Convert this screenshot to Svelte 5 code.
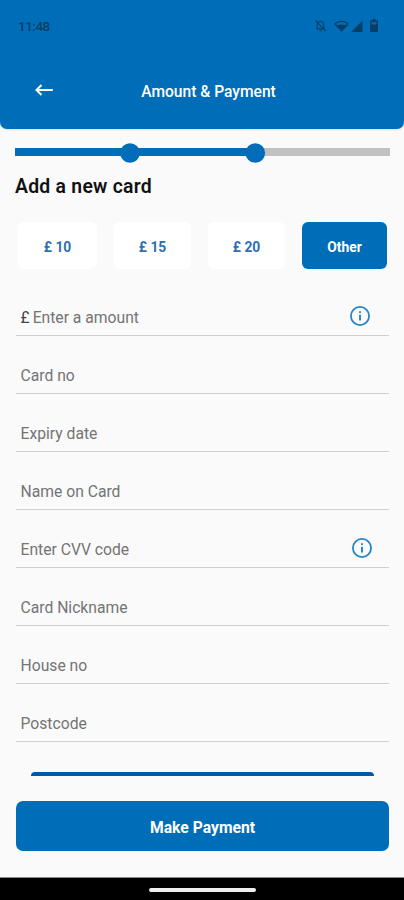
<script lang="ts">
	const amounts = ['£ 10', '£ 15', '£ 20', 'Other'];

	const fields = [
		{ label: 'Enter a amount', prefix: '£', info: true },
		{ label: 'Card no' },
		{ label: 'Expiry date' },
		{ label: 'Name on Card' },
		{ label: 'Enter CVV code', info: true },
		{ label: 'Card Nickname' },
		{ label: 'House no' },
		{ label: 'Postcode' }
	];

	let selected = $state('Other');
</script>

<div class="screen">
	<header class="header">
		<div class="status">
			<span class="time">11:48</span>
			<svg class="bell" viewBox="0 0 14 14" width="13" height="13">
				<path d="M3.5 10.5V6.2Q3.5 3 7 2.5Q10.5 3 10.5 6.2V10.5ZM2.3 10.7H11.7M6 12.5H8M1.5 1.5L12.8 13" />
			</svg>
			<svg class="wifi" viewBox="0 0 16 12" width="15" height="12">
				<path d="M1 3.6Q8 -1.4 15 3.6L8 11.2Z" fill="none" stroke="currentColor" stroke-width="1.2" />
				<path d="M2.7 5.4Q8 3.4 13.3 5.4L8 11.4Z" fill="currentColor" />
			</svg>
			<svg class="signal" viewBox="0 0 12 12" width="12" height="12">
				<path d="M11.5 .5V12H.3Z" fill="currentColor" />
			</svg>
			<svg class="battery" viewBox="0 0 8 13" width="8" height="13">
				<path d="M2.5 0H5.5V1.5H8V13H0V1.5H2.5Z" fill="currentColor" />
				<path d="M1.5 3H6.5V5.5H1.5Z" fill="#0568ac" />
			</svg>
		</div>
		<div class="nav">
			<button class="back" aria-label="Back">
				<svg viewBox="0 0 18 12" width="18" height="12">
					<path d="M17.8 6H1.5M6.5 1L1.5 6L6.5 11" fill="none" stroke="currentColor" stroke-width="2" />
				</svg>
			</button>
			<h1>Amount &amp; Payment</h1>
		</div>
	</header>

	<main class="content">
		<svg class="progress" viewBox="0 0 375 20" width="375" height="20">
			<path d="M0 9H375" stroke="#c1c1c1" stroke-width="8" />
			<path d="M0 9H240" stroke="#006db8" stroke-width="8" />
			<circle cx="115" cy="10" r="9.8" fill="#006db8" />
			<circle cx="240.3" cy="10" r="9.8" fill="#006db8" />
		</svg>

		<h2>Add a new card</h2>

		<div class="amounts">
			{#each amounts as amount}
				<button class="amount" class:active={selected === amount} onclick={() => (selected = amount)}>
					{amount}
				</button>
			{/each}
		</div>

		<div class="fields">
			{#each fields as field}
				<div class="field">
					{#if field.prefix}<span class="prefix">{field.prefix}</span>{/if}
					<span class="label">{field.label}</span>
					{#if field.info}
						<svg class="info" class:inset={field.prefix} viewBox="0 0 20 20" width="20" height="20">
							<circle cx="10" cy="10" r="9.1" fill="none" stroke="currentColor" stroke-width="1.8" />
							<path d="M10 5.2V7.1M10 8.8V14.6" stroke="currentColor" stroke-width="1.9" />
						</svg>
					{/if}
				</div>
			{/each}
		</div>

		<div class="peek"></div>
	</main>

	<footer class="footer">
		<button class="pay">Make Payment</button>
	</footer>
	<div class="gesture"><span></span></div>
</div>

<style>
	:global(body) {
		margin: 0;
	}

	.screen {
		display: flex;
		flex-direction: column;
		width: 404px;
		height: 900px;
		overflow: hidden;
		background: #fafafa;
		font-family: Roboto, sans-serif;
	}

	button {
		padding: 0;
		border: none;
		font-family: inherit;
		cursor: pointer;
	}

	svg {
		display: block;
	}

	.header {
		flex: none;
		height: 128.5px;
		border-radius: 0 0 7px 7px;
		background: #006db8;
		box-shadow: 0 1px 2px #ddd;
	}

	.status {
		display: flex;
		align-items: center;
		height: 51px;
		padding: 0 26px 0 18px;
		color: #073e67;
	}

	.time {
		flex: 1;
		font-size: 13.5px;
		font-weight: 500;
		letter-spacing: -0.5px;
	}

	.bell {
		margin-right: 7px;
		fill: none;
		stroke: currentColor;
		stroke-width: 1.2;
	}

	.wifi {
		margin-right: 2px;
	}

	.signal {
		margin-right: 7px;
	}

	.nav {
		display: grid;
		grid-template-columns: 35px 1fr 22px;
		align-items: center;
		height: 78px;
	}

	.back {
		width: 18px;
		margin-left: 35px;
		background: none;
		color: #fff;
	}

	h1 {
		margin: 3px 0 0;
		color: #fff;
		font-size: 15.6px;
		font-weight: 500;
		line-height: 20px;
		text-align: center;
	}

	.content {
		display: flex;
		flex: 1;
		flex-direction: column;
		padding: 14.5px 15px 0;
	}

	h2 {
		margin: 12px 0 23px;
		color: #111;
		font-size: 19.4px;
		font-weight: 600;
		letter-spacing: 0.25px;
		line-height: 24px;
	}

	.amounts {
		display: grid;
		grid-template-columns: 79px 77px 77px 85px;
		gap: 17px;
		padding-left: 3px;
	}

	.amount {
		height: 47px;
		padding-top: 2px;
		border-radius: 6px;
		background: #fff;
		color: #2d70b3;
		font-size: 13.8px;
		font-weight: 700;
	}

	.amount.active {
		background: #006db8;
		color: #fff;
	}

	.fields {
		margin: 9px 0 0 1px;
	}

	.field {
		display: flex;
		align-items: flex-end;
		box-sizing: border-box;
		width: 373px;
		height: 58px;
		padding: 0 17px 8px 4.5px;
		border-bottom: 1px solid #cecece;
		color: #747474;
		font-size: 15.7px;
		line-height: 18px;
	}

	.prefix {
		margin-right: 3px;
		color: #444;
	}

	.label {
		flex: 1;
	}

	.info {
		margin-bottom: 1px;
		color: #2585c8;
	}

	.info.inset {
		margin-right: 2px;
	}

	.peek {
		width: 343px;
		height: 4px;
		margin: 30px 0 0 16px;
		border-radius: 5px 5px 0 0;
		background: #0059a7;
	}

	.footer {
		flex: none;
		padding: 0 15px 25.5px 16px;
	}

	.pay {
		display: block;
		width: 100%;
		height: 50px;
		padding-top: 2px;
		border-radius: 7px;
		background: #006db8;
		color: #fff;
		font-size: 15.7px;
		font-weight: 700;
	}

	.gesture {
		display: flex;
		flex: none;
		justify-content: center;
		height: 22.5px;
		border-top: 1px solid #888;
		background: #000;
	}

	.gesture span {
		width: 107px;
		height: 4px;
		margin: 10px 0 0 1px;
		border-radius: 2px;
		background: #eee;
	}
</style>
